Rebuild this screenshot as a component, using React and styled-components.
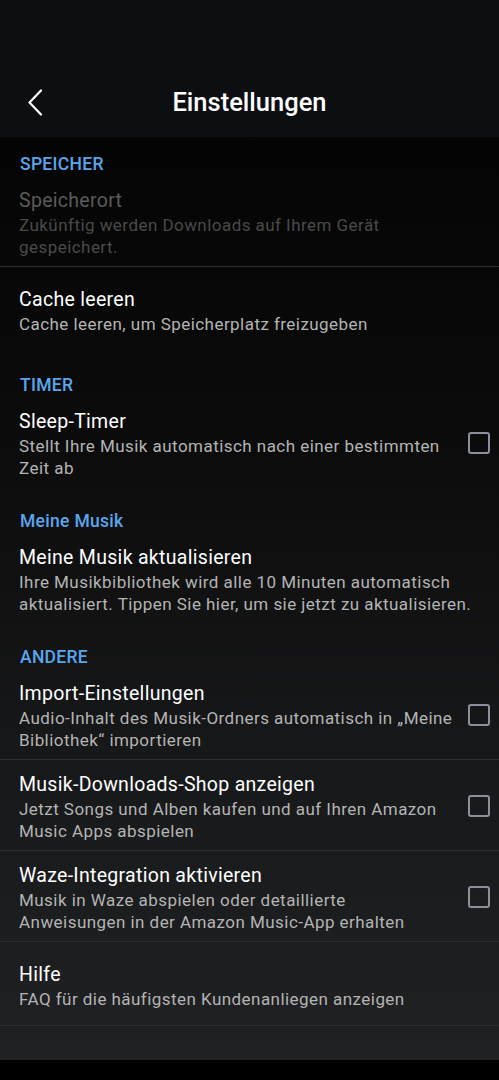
import React from "react";
import styled, { createGlobalStyle } from "styled-components";

const Global = createGlobalStyle`
  html, body { margin: 0; padding: 0; background: #000; }
  body { font-family: Roboto, "Noto Sans", "Liberation Sans", sans-serif; -webkit-font-smoothing: antialiased; }
`;

const Screen = styled.div`
  width: 499px;
  height: 1080px;
  display: flex;
  flex-direction: column;
  background: #000;
  overflow: hidden;
`;

const Header = styled.header`
  height: 137px;
  flex: none;
  background: #0d0e12;
  display: flex;
  align-items: flex-end;
  padding-bottom: 20px;
  box-sizing: border-box;
  position: relative;
`;

const BackButton = styled.button`
  position: absolute;
  left: 20px;
  bottom: 20px;
  width: 30px;
  height: 30px;
  padding: 0;
  border: 0;
  background: none;
  display: flex;
  align-items: center;
  justify-content: center;
`;

const Title = styled.h1`
  margin: 0;
  width: 100%;
  text-align: center;
  color: #fff;
  font-size: 25.5px;
  font-weight: 500;
  line-height: 30px;
`;

const Content = styled.main`
  flex: 1;
  background: linear-gradient(180deg, #040404 0%, #0c0c0d 35%, #18191a 70%, #202123 100%);
  display: flex;
  flex-direction: column;
`;

const SectionLabel = styled.div`
  padding: ${(p) => (p.$first ? "17px" : "24px")} 20px 2px;
  color: #5aa6ee;
  font-size: 17.5px;
  font-weight: 500;
  line-height: 20px;
  letter-spacing: 0.3px;
`;

const Row = styled.div`
  min-height: 84px;
  box-sizing: border-box;
  padding: 12px 9px 8px 19px;
  display: flex;
  align-items: center;
  gap: 10px;
  border-bottom: ${(p) => (p.$divider ? "1.5px solid #2b2c2e" : "0")};
`;

const Texts = styled.div`
  flex: 1;
  min-width: 0;
  max-width: ${(p) => (p.$narrow ? "438px" : "458px")};
`;

const ItemTitle = styled.div`
  font-size: 19.5px;
  line-height: 26px;
  letter-spacing: 0.3px;
  color: ${(p) => (p.$disabled ? "#5b5b5b" : "#ffffff")};
`;

const ItemSub = styled.div`
  font-size: 17px;
  line-height: 22px;
  letter-spacing: 0.45px;
  color: ${(p) => (p.$disabled ? "#4a4a4a" : "#b4b4b4")};
`;

const Checkbox = styled.span`
  width: 22px;
  height: 22px;
  box-sizing: border-box;
  border: 2.5px solid #8b909c;
  border-radius: 3px;
  flex: none;
  margin-left: auto;
  margin-bottom: 3px;
`;

const BottomBar = styled.div`
  height: 20px;
  flex: none;
  background: #000;
`;

const Item = ({ title, sub, check, divider, disabled }) => (
  <Row $divider={divider}>
    <Texts $narrow={check}>
      <ItemTitle $disabled={disabled}>{title}</ItemTitle>
      <ItemSub $disabled={disabled}>{sub}</ItemSub>
    </Texts>
    {check && <Checkbox />}
  </Row>
);

export default function App() {
  return (
    <Screen>
      <Global />
      <Header>
        <BackButton aria-label="Zurück">
          <svg width="16" height="27" viewBox="0 0 16 27" fill="none">
            <path d="M14 1.5 L2.5 13.5 L14 25.5" stroke="#fff" strokeWidth="2.2" strokeLinecap="round" strokeLinejoin="round" />
          </svg>
        </BackButton>
        <Title>Einstellungen</Title>
      </Header>
      <Content>
        <SectionLabel $first>SPEICHER</SectionLabel>
        <Item
          disabled
          divider
          title="Speicherort"
          sub="Zukünftig werden Downloads auf Ihrem Gerät gespeichert."
        />
        <Item title="Cache leeren" sub="Cache leeren, um Speicherplatz freizugeben" />

        <SectionLabel>TIMER</SectionLabel>
        <Item
          check
          title="Sleep-Timer"
          sub="Stellt Ihre Musik automatisch nach einer bestimmten Zeit ab"
        />

        <SectionLabel>Meine Musik</SectionLabel>
        <Item
          title="Meine Musik aktualisieren"
          sub="Ihre Musikbibliothek wird alle 10 Minuten automatisch aktualisiert. Tippen Sie hier, um sie jetzt zu aktualisieren."
        />

        <SectionLabel>ANDERE</SectionLabel>
        <Item
          check
          divider
          title="Import-Einstellungen"
          sub="Audio-Inhalt des Musik-Ordners automatisch in „Meine Bibliothek“ importieren"
        />
        <Item
          check
          divider
          title="Musik-Downloads-Shop anzeigen"
          sub="Jetzt Songs und Alben kaufen und auf Ihren Amazon Music Apps abspielen"
        />
        <Item
          check
          divider
          title="Waze-Integration aktivieren"
          sub="Musik in Waze abspielen oder detaillierte Anweisungen in der Amazon Music-App erhalten"
        />
        <Item divider title="Hilfe" sub="FAQ für die häufigsten Kundenanliegen anzeigen" />
      </Content>
      <BottomBar />
    </Screen>
  );
}
